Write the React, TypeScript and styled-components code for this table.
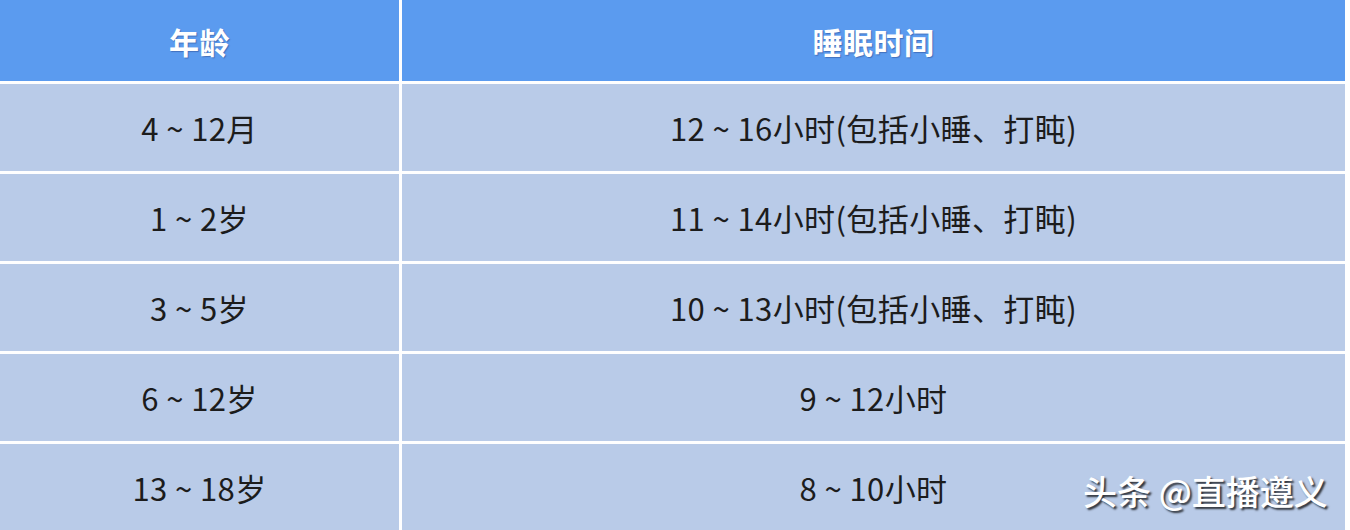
import React from 'react'
import styled, { createGlobalStyle } from 'styled-components'

const Global = createGlobalStyle`
  html, body {
    margin: 0;
    padding: 0;
    background: #ffffff;
  }
`

const Page = styled.div`
  position: relative;
  width: 1350px;
  height: 530px;
  overflow: hidden;
  background: #ffffff;
  font-family: "Noto Sans CJK SC", "Noto Sans", sans-serif;
`

const Table = styled.div`
  display: grid;
  grid-template-columns: 399px 943px;
  grid-template-rows: 81px repeat(5, 87px);
  gap: 3px;
  width: 1345px;
`

const Cell = styled.div<{ $head?: boolean }>`
  display: flex;
  align-items: center;
  justify-content: center;
  background: ${p => (p.$head ? '#5b9bef' : '#b9cbe8')};
  color: ${p => (p.$head ? '#ffffff' : '#1c1c1c')};
  font-size: ${p => (p.$head ? '30px' : '31px')};
  font-weight: ${p => (p.$head ? 700 : 400)};
  text-shadow: ${p => (p.$head ? '1px 1px 1px rgba(40, 70, 140, 0.5)' : 'none')};
  letter-spacing: ${p => (p.$head ? '0.5px' : '0.4px')};
  white-space: pre;
`

const Watermark = styled.div`
  position: absolute;
  left: 1083px;
  top: 466px;
  color: #ffffff;
  font-size: 34px;
  font-weight: 500;
  text-shadow: 2px 2px 2px rgba(0, 0, 0, 0.75);
  white-space: pre;
`

const rows: [string, string][] = [
  ['4 ~ 12月', '12 ~ 16小时(包括小睡、打盹)'],
  ['1 ~ 2岁', '11 ~ 14小时(包括小睡、打盹)'],
  ['3 ~ 5岁', '10 ~ 13小时(包括小睡、打盹)'],
  ['6 ~ 12岁', '9 ~ 12小时'],
  ['13 ~ 18岁', '8 ~ 10小时'],
]

const App = () => {
  return (
    <>
      <Global />
      <Page>
        <Table>
          <Cell $head>年龄</Cell>
          <Cell $head>睡眠时间</Cell>
          {rows.map(([age, sleep]) => (
            <React.Fragment key={age}>
              <Cell>{age}</Cell>
              <Cell>{sleep}</Cell>
            </React.Fragment>
          ))}
        </Table>
        <Watermark>头条 @直播遵义</Watermark>
      </Page>
    </>
  )
}

export default App
